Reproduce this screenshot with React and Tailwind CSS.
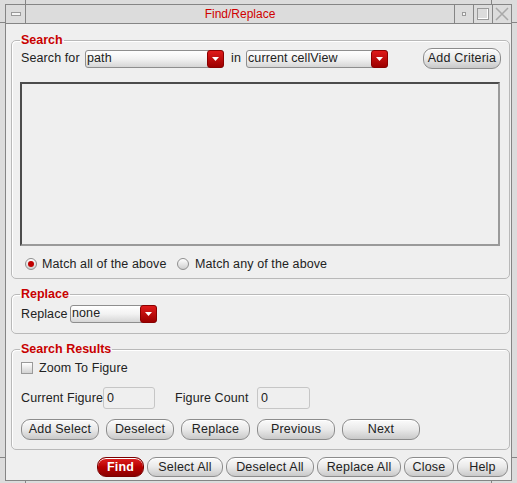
import React from "react";

function Btn({ children, className = "", red = false }) {
  const look = red
    ? "border-[#7a0000] bg-gradient-to-b from-[#e02020] via-[#b80000] to-[#8a0000] text-white font-bold"
    : "border-[#8c8c8c] bg-gradient-to-b from-[#fbfbfb] via-[#e9e9e9] to-[#c9c9c9] text-[#222]";
  return (
    <button
      className={`flex h-[20px] shrink-0 items-center justify-center whitespace-nowrap rounded-[9px] border text-[12.5px] leading-none tracking-[0.2px] shadow-[inset_0_1px_0_#fff] ${look} ${className}`}
    >
      {children}
    </button>
  );
}

function Dropdown({ value, className = "" }) {
  return (
    <div
      className={`flex h-[18px] shrink-0 items-stretch rounded-[3px] border border-[#8e8e8e] bg-gradient-to-b from-white via-[#f2f2f2] to-[#d6d6d6] ${className}`}
    >
      <span className="flex-1 whitespace-nowrap pl-[1px] text-[12.5px] leading-[14px] text-[#222]">
        {value}
      </span>
      <span className="-my-px -mr-px flex w-[17px] items-center justify-center rounded-[3px] border border-[#8a0000] bg-gradient-to-b from-[#e01a1a] to-[#9c0000]">
        <svg width="7" height="4" viewBox="0 0 7 4">
          <path d="M0 0h7L3.5 4z" fill="#fff" />
        </svg>
      </span>
    </div>
  );
}

function Radio({ on }) {
  return (
    <span className="flex h-[12px] w-[12px] shrink-0 items-center justify-center rounded-full border border-[#8f8f8f] bg-gradient-to-b from-white to-[#cfcfcf]">
      {on && <span className="h-[6px] w-[6px] rounded-full bg-[#c00000]" />}
    </span>
  );
}

function Group({ title, className = "", children }) {
  return (
    <fieldset
      className={`rounded-[5px] border border-[#b9b9b9] px-[8px] shadow-[inset_1px_1px_0_#fff] ${className}`}
    >
      <legend className="px-[1px] text-[12.5px] font-bold leading-[15px] tracking-normal text-[#c80000]">
        {title}
      </legend>
      {children}
    </fieldset>
  );
}

export default function App() {
  return (
    <div className="relative h-[483px] w-[517px] overflow-hidden bg-[#dcdcdc] px-[5px] pb-[2px] pt-[4px] font-['Liberation_Sans',Arial,sans-serif] text-[12.5px] tracking-[0.1px] text-[#222]">
      {/* frame handles */}
      <span className="absolute left-[25px] top-0 h-[4px] w-px bg-[#858585]" />
      <span className="absolute left-[491px] top-0 h-[4px] w-px bg-[#858585]" />
      <span className="absolute bottom-0 left-[25px] h-[2px] w-px bg-[#858585]" />
      <span className="absolute bottom-0 left-[491px] h-[2px] w-px bg-[#858585]" />
      <span className="absolute left-0 top-[22px] h-px w-[5px] bg-[#858585]" />
      <span className="absolute left-0 top-[457px] h-px w-[5px] bg-[#858585]" />
      <span className="absolute right-0 top-[22px] h-px w-[5px] bg-[#858585]" />
      <span className="absolute right-0 top-[457px] h-px w-[5px] bg-[#858585]" />

      <div className="flex h-full flex-col border border-[#858585]">
        {/* Title bar */}
        <div className="flex h-[19px] border-b border-[#858585] bg-[#dcdcdc]">
          <div className="flex w-[20px] items-center justify-center border-r border-[#858585]">
            <span className="h-[4px] w-[10px] border border-[#9a9a9a] bg-[#f4f4f4]" />
          </div>
          <div className="flex flex-1 items-center justify-center text-[12px] tracking-normal text-[#d00000]">
            Find/Replace
          </div>
          <div className="flex w-[19px] items-center justify-center border-l border-[#858585]">
            <span className="h-[4px] w-[4px] border border-[#9a9a9a] bg-[#f4f4f4]" />
          </div>
          <div className="flex w-[19px] items-center justify-center border-l border-[#858585]">
            <span className="h-[12px] w-[12px] border border-[#9a9a9a] shadow-[inset_-1px_-1px_0_#fff]" />
          </div>
          <div className="flex w-[19px] items-center justify-center border-l border-[#858585]">
            <svg width="14" height="14" viewBox="0 0 14 14">
              <path d="M1 1l12 12M13 1L1 13" stroke="#a8a8a8" strokeWidth="1.5" />
            </svg>
          </div>
        </div>

        {/* Body */}
        <div className="flex flex-1 flex-col bg-[#efefef] pl-[5px] pr-[1px] pt-[9px]">
          <Group title="Search" className="pb-[8px]">
            <div className="flex h-[21px] items-center">
              <span className="w-[65px] shrink-0 whitespace-nowrap pl-[1px]">Search for</span>
              <Dropdown value="path" className="w-[139px]" />
              <span className="w-[22px] shrink-0 pl-[7px]">in</span>
              <Dropdown value="current cellView" className="w-[142px]" />
              <Btn className="ml-[35px] h-[21px] w-[78px]">Add Criteria</Btn>
            </div>
            <div className="mt-[13px] h-[164px] w-[480px] border-2 border-[#4c4c4c] border-b-[#9a9a9a] border-r-[#9a9a9a]" />
            <div className="mt-[12px] flex h-[12px] items-center">
              <span className="ml-[5px]">
                <Radio on />
              </span>
              <span className="ml-[5px] w-[135px] shrink-0 whitespace-nowrap leading-none">
                Match all of the above
              </span>
              <Radio />
              <span className="ml-[6px] whitespace-nowrap leading-none">Match any of the above</span>
            </div>
          </Group>

          <Group title="Replace" className="mt-[8px] pb-[10px]">
            <div className="mt-[3px] flex h-[18px] items-center">
              <span className="w-[50px] shrink-0 whitespace-nowrap pl-[1px]">Replace</span>
              <Dropdown value="none" className="w-[87px]" />
            </div>
          </Group>

          <Group title="Search Results" className="mt-[8px] pb-[9px]">
            <div className="mt-[5px] flex h-[12px] items-center">
              <span className="ml-[1px] h-[12px] w-[12px] shrink-0 border border-[#9a9a9a] bg-gradient-to-b from-white to-[#d2d2d2]" />
              <span className="ml-[6px] whitespace-nowrap leading-none">Zoom To Figure</span>
            </div>
            <div className="mt-[13px] flex h-[22px] items-center">
              <span className="w-[83px] shrink-0 whitespace-nowrap pl-[1px]">Current Figure</span>
              <span className="flex h-[22px] w-[52px] shrink-0 items-center rounded-[3px] border border-[#c6c6c6] pl-[3px]">
                0
              </span>
              <span className="ml-[20px] w-[82px] shrink-0 whitespace-nowrap">Figure Count</span>
              <span className="flex h-[22px] w-[53px] shrink-0 items-center rounded-[3px] border border-[#c6c6c6] pl-[3px]">
                0
              </span>
            </div>
            <div className="mt-[10px] flex h-[21px] items-center gap-[7px] pl-[1px]">
              <Btn className="h-[21px] w-[78px]">Add Select</Btn>
              <Btn className="h-[21px] w-[68px]">Deselect</Btn>
              <Btn className="h-[21px] w-[69px]">Replace</Btn>
              <Btn className="h-[21px] w-[78px]">Previous</Btn>
              <Btn className="h-[21px] w-[78px]">Next</Btn>
            </div>
          </Group>

          <div className="mt-[7px] flex justify-end gap-[3px] pr-[2px]">
            <Btn red className="w-[47px]">Find</Btn>
            <Btn className="w-[76px]">Select All</Btn>
            <Btn className="w-[88px]">Deselect All</Btn>
            <Btn className="w-[84px]">Replace All</Btn>
            <Btn className="w-[50px]">Close</Btn>
            <Btn className="w-[51px]">Help</Btn>
          </div>
        </div>
      </div>
    </div>
  );
}
